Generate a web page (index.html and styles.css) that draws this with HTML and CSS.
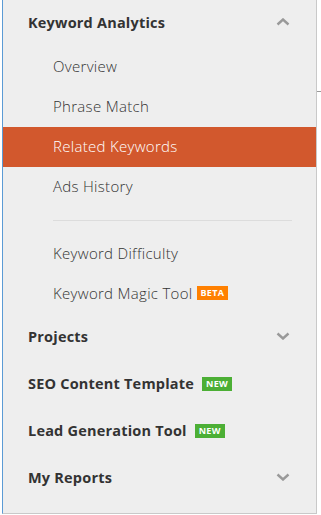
FILE: index.html
```html
<!DOCTYPE html>
<html lang="en">
<head>
    <meta charset="UTF-8">
    <meta name="viewport" content="width=device-width, initial-scale=1.0">
    <title>Menu</title>
    <link rel="stylesheet" href="styles.css">
</head>
<body>
    <nav class="menu">
        <div class="group">
            <div class="head">
                <span>Keyword Analytics</span>
                <svg class="chevron" width="14" height="8" viewBox="0 0 14 8"><path d="M1.5 6.5 L7 1.5 L12.5 6.5" fill="none" stroke="#999" stroke-width="2.4"/></svg>
            </div>
            <a class="item">Overview</a>
            <a class="item">Phrase Match</a>
            <a class="item active">Related Keywords</a>
            <a class="item">Ads History</a>
            <div class="sep"></div>
            <a class="item">Keyword Difficulty</a>
            <a class="item">Keyword Magic Tool <span class="badge beta">BETA</span></a>
        </div>
        <div class="head">
            <span>Projects</span>
            <svg class="chevron" width="14" height="8" viewBox="0 0 14 8"><path d="M1.5 1.5 L7 6.5 L12.5 1.5" fill="none" stroke="#999" stroke-width="2.4"/></svg>
        </div>
        <div class="head">
            <span>SEO Content Template <span class="badge new">NEW</span></span>
        </div>
        <div class="head">
            <span>Lead Generation Tool <span class="badge new">NEW</span></span>
        </div>
        <div class="head">
            <span>My Reports</span>
            <svg class="chevron" width="14" height="8" viewBox="0 0 14 8"><path d="M1.5 1.5 L7 6.5 L12.5 1.5" fill="none" stroke="#999" stroke-width="2.4"/></svg>
        </div>
    </nav>
</body>
</html>
```

FILE: styles.css
```css
body {
    margin: 0;
    background: #fff linear-gradient(#999, #999) no-repeat right 0 top 91px / 4px 1px;
    font-family: "Open Sans", sans-serif;
    color: #333;
}
.menu {
    box-sizing: border-box;
    width: 315px;
    height: 514px;
    margin-left: 2px;
    padding-bottom: 12px;
    background: #eeeeee;
    border-left: 1px solid #5b9bd5;
    border-right: 1px solid #c9c9c9;
    border-bottom: 1px solid #c9c9c9;
}
.head {
    height: 47px;
    display: flex;
    align-items: center;
    justify-content: space-between;
    padding: 0 26px 3px 25px;
    box-sizing: border-box;
    font-size: 14.5px;
    font-weight: 700;
    letter-spacing: 0.2px;
    color: #333;
}
.item {
    display: flex;
    align-items: center;
    box-sizing: border-box;
    height: 40px;
    padding: 0 0 2px 50px;
    font-size: 15px;
    font-weight: 300;
    letter-spacing: 0.3px;
    color: #333;
}
.item.active {
    background: #d2582d;
    color: #fff;
}
.sep {
    height: 1px;
    margin: 13px 24px 13px 50px;
    background: #dcdcdc;
}
.badge {
    display: inline-block;
    height: 14px;
    line-height: 14px;
    padding: 0 4px;
    margin-left: 4px;
    font-size: 9px;
    font-weight: 700;
    letter-spacing: 0.3px;
    color: #fff;
    vertical-align: 2px;
}
.beta {
    background: #ff8000;
}
.new {
    background: #4caf35;
}
.chevron {
    display: block;
}
```
